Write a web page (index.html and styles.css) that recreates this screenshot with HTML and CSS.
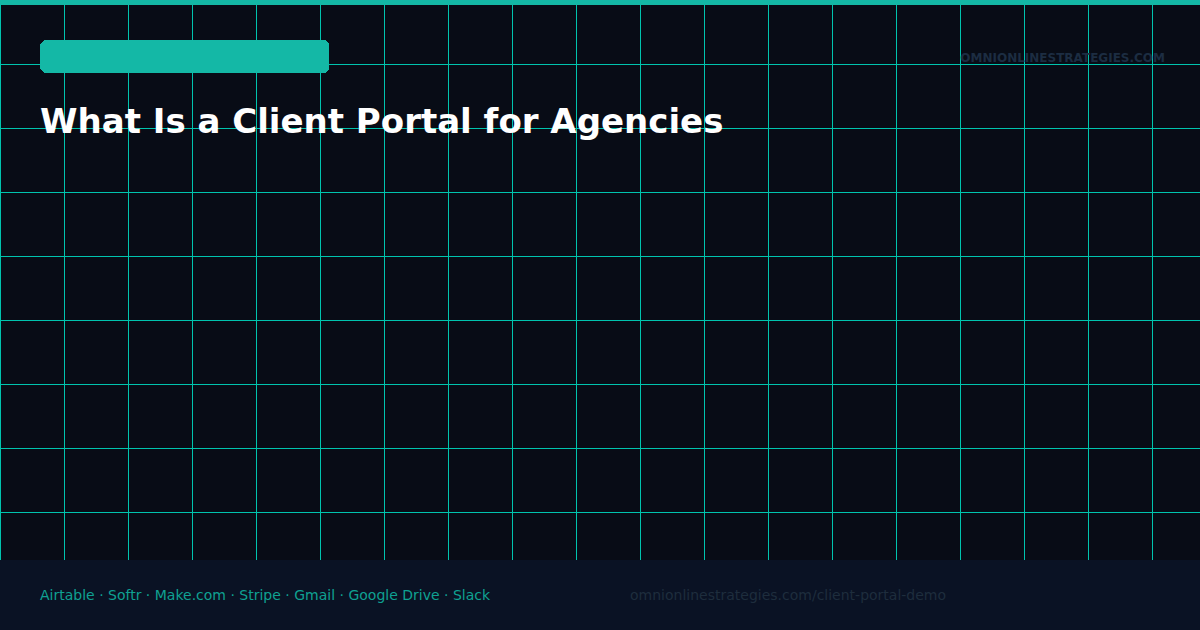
FILE: index.html
```html
<!DOCTYPE html>
<html lang="en">
<head>
<meta charset="utf-8">
<title>What Is a Client Portal for Agencies</title>
<link rel="stylesheet" href="styles.css">
</head>
<body>
<div class="card">
  <main class="canvas">
    <div class="topbar"></div>
    <header class="head">
      <div class="intro">
        <svg class="pill" width="289" height="33" viewBox="0 0 289 33" aria-hidden="true"><polygon points="4,0 285,0 289,4 289,29 285,33 4,33 0,29 0,4" fill="#14b8a6" shape-rendering="crispEdges"/></svg>
        <h1 class="title">What Is a Client Portal for Agencies</h1>
      </div>
      <div class="domain">OMNIONLINESTRATEGIES.COM</div>
    </header>
  </main>
  <footer class="foot">
    <span class="tools">Airtable · Softr · Make.com · Stripe · Gmail · Google Drive · Slack</span>
    <span class="link">omnionlinestrategies.com/client-portal-demo</span>
  </footer>
</div>
</body>
</html>
```

FILE: styles.css
```css
* { box-sizing: border-box; margin: 0; padding: 0; }
html, body { width: 1200px; height: 630px; overflow: hidden; background: #080c16; }
body { font-family: "DejaVu Sans", sans-serif; }
.card { width: 1200px; height: 630px; display: flex; flex-direction: column; }
.canvas {
  height: 560px;
  background-color: #080c16;
  background-image:
    linear-gradient(to right, #00c4ae 1px, transparent 1px),
    linear-gradient(to bottom, #00c4ae 1px, transparent 1px);
  background-size: 64px 64px;
}
.topbar { height: 5px; background: #14b8a6; }
.head { display: flex; justify-content: space-between; align-items: flex-start; padding: 35px 35px 0 40px; }
.intro { display: flex; flex-direction: column; }
.pill { display: block; }
.title { margin-top: 26px; font-size: 34px; line-height: 44px; font-weight: 700; color: #ffffff; white-space: nowrap; }
.domain { margin-top: 11px; font-size: 12px; line-height: 14px; font-weight: 700; color: #1c2d42; }
.foot { height: 70px; display: flex; align-items: center; padding: 0 0 0 40px; background: #0a1224; font-size: 14px; line-height: 16px; }
.tools { width: 590px; color: #0fa192; }
.link { color: #1e2d3d; }
```
